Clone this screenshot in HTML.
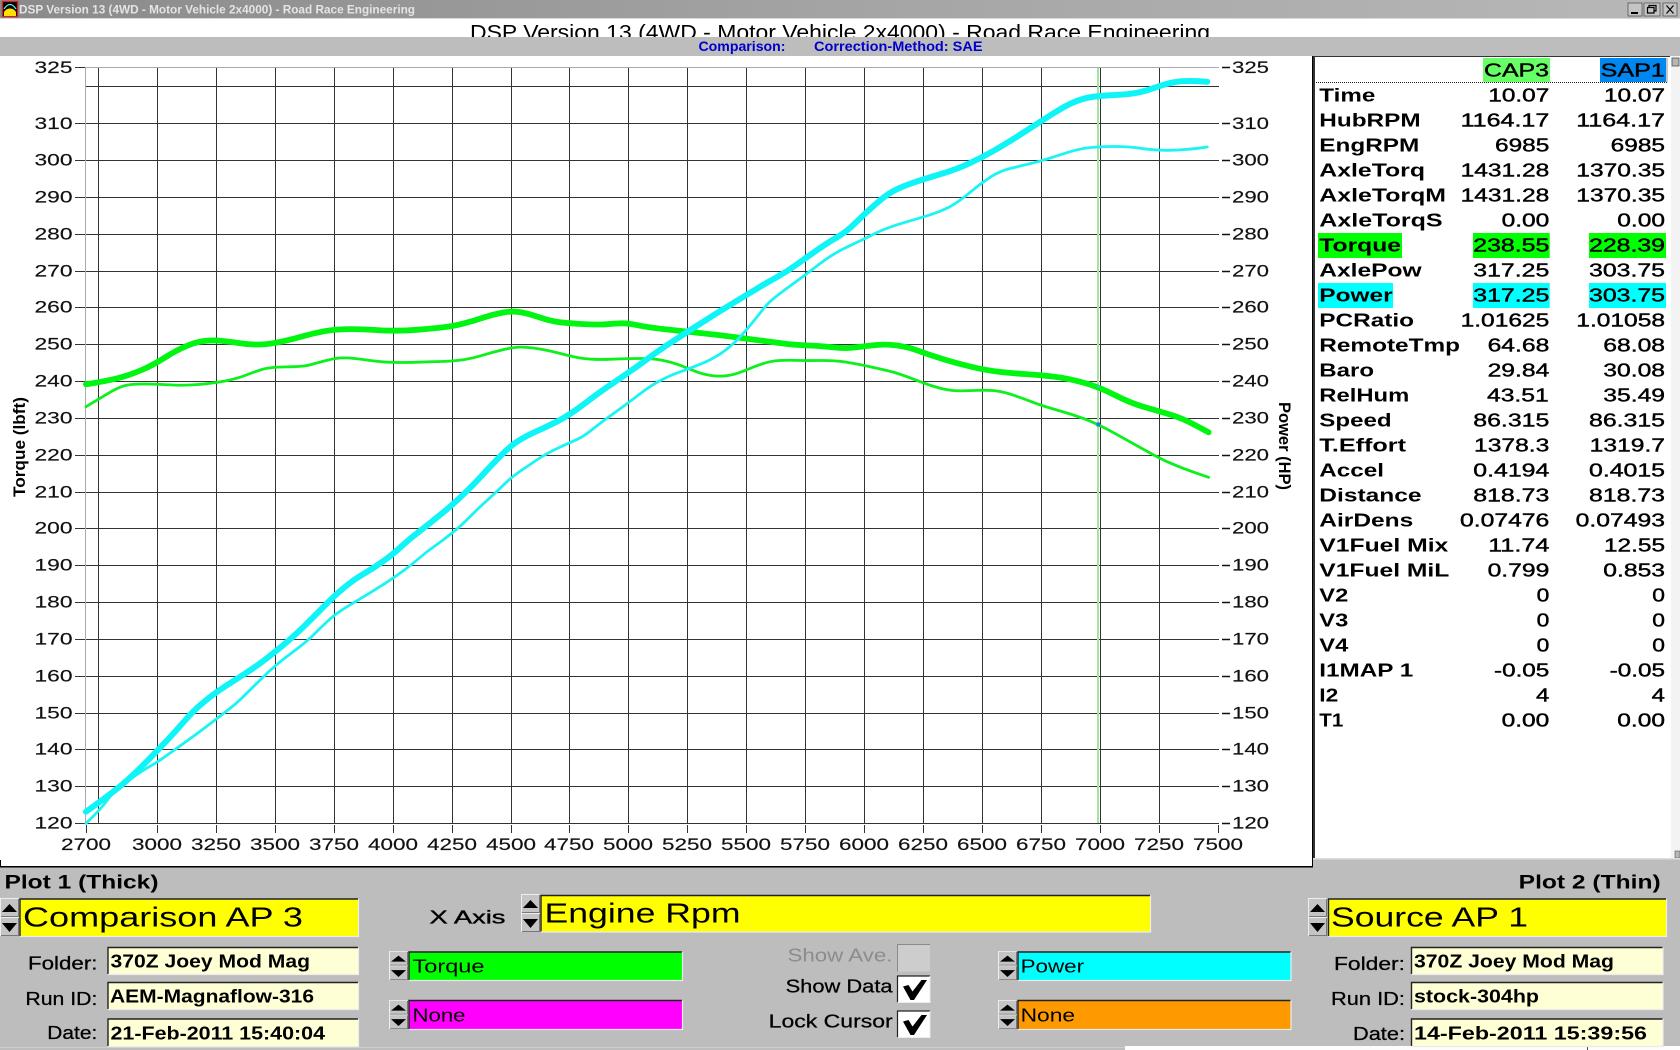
<!DOCTYPE html>
<html lang="en"><head><meta charset="utf-8"><title>DSP Version 13</title>
<style>
html,body{margin:0;padding:0;background:#bdbdbd;width:1680px;height:1050px;overflow:hidden}
svg{display:block}
text{font-family:"Liberation Sans",Arial,sans-serif;fill:#000}
.a{font-size:17px;fill:#111;stroke:#111;stroke-width:.15px}
.l{font-size:18.3px;font-weight:bold}
.v{font-size:18.3px;stroke:#000;stroke-width:.4px}
.b{font-size:18px;font-weight:bold}
.m{font-size:18px;stroke:#000;stroke-width:.25px}
.big{font-size:27.5px}
.c{font-size:18.5px}
</style></head><body>
<svg xmlns="http://www.w3.org/2000/svg" width="1680" height="1050" viewBox="0 0 1680 1050">
<defs>
<linearGradient id="tb" x1="0" x2="1" y1="0" y2="0"><stop offset="0" stop-color="#8a8a8a"/><stop offset=".5" stop-color="#a4a4a4"/><stop offset="1" stop-color="#b8b8b8"/></linearGradient>
<clipPath id="tc"><rect x="0" y="19" width="1680" height="18"/></clipPath>
<g id="spin">
<rect x="0" y="0" width="19" height="19" fill="#c4c4c4"/><rect x="0" y="19" width="19" height="19" fill="#c4c4c4"/>
<path d="M0 18.5H19M0 37.5H19M18.5 0V38" stroke="#777" stroke-width="1" fill="none"/>
<path d="M0 .5H19M.5 0V38M0 19.5H19" stroke="#eee" stroke-width="1" fill="none"/>
<path d="M2 14L9.5 6L17 14Z M2 25L9.5 34L17 25Z" fill="#000"/>
</g>
</defs>

<!-- title bar -->
<rect x="0" y="0" width="1680" height="18" fill="url(#tb)"/>
<rect x="0" y="18" width="1680" height="1" fill="#d8d8d8"/>
<rect x="2.5" y="1.5" width="15" height="15" fill="#000" stroke="#c22" stroke-width="1.4"/>
<path d="M4 16V12Q6 8.5 10 8.5T16 12V16Z" fill="#ffe000"/>
<path d="M4 9Q10 0 16 9" fill="none" stroke="#5ee" stroke-width="1.3"/>
<text x="19" y="13.5" font-size="11.5" font-weight="bold" style="fill:#e4e4e4" textLength="396" lengthAdjust="spacingAndGlyphs">DSP Version 13 (4WD - Motor Vehicle 2x4000) - Road Race Engineering</text>
<g>
<rect x="1628" y="3" width="14" height="13" fill="#c4c4c4" stroke="#555" stroke-width=".8"/>
<rect x="1631" y="12" width="7" height="2" fill="#000"/>
<rect x="1644" y="3" width="16" height="13" fill="#c4c4c4" stroke="#555" stroke-width=".8"/>
<path d="M1649 7.5V5.5H1656V11H1654M1647.5 7.5H1654V13H1647.5Z" fill="none" stroke="#000" stroke-width="1.2"/>
<rect x="1663" y="3" width="14" height="13" fill="#c4c4c4" stroke="#555" stroke-width=".8"/>
<path d="M1666.5 5.5L1673.5 13.5M1673.5 5.5L1666.5 13.5" stroke="#000" stroke-width="1.2"/>
</g>

<!-- header -->
<rect x="0" y="19" width="1680" height="18" fill="#fff"/>
<text clip-path="url(#tc)" x="470" y="39.5" font-size="21" textLength="740" lengthAdjust="spacingAndGlyphs">DSP Version 13 (4WD - Motor Vehicle 2x4000) - Road Race Engineering</text>
<rect x="0" y="37" width="1680" height="19" fill="#bdbdbd"/>
<text x="698.5" y="51" font-size="13.5" font-weight="bold" style="fill:#0000cc" textLength="87" lengthAdjust="spacingAndGlyphs">Comparison:</text>
<text x="814" y="51" font-size="13.5" font-weight="bold" style="fill:#0000cc" textLength="168.5" lengthAdjust="spacingAndGlyphs">Correction-Method: SAE</text>

<!-- plot area -->
<rect x="0" y="56" width="1313" height="811" fill="#fff"/>
<rect x="0" y="866" width="1313" height="1.5" fill="#000"/>
<rect x="0" y="860" width="1" height="7" fill="#000"/>
<rect x="1312" y="56" width="1" height="811" fill="#000"/>

<g stroke="#333" stroke-width="1" fill="none" shape-rendering="crispEdges">
<path d="M85 86.5H1219M85 123.5H1219M85 160.5H1219M85 197.5H1219M85 234.5H1219M85 271.5H1219M85 307.5H1219M85 344.5H1219M85 381.5H1219M85 418.5H1219M85 455.5H1219M85 492.5H1219M85 528.5H1219M85 565.5H1219M85 602.5H1219M85 639.5H1219M85 676.5H1219M85 713.5H1219M85 749.5H1219M85 786.5H1219M85 823.5H1219"/>
<path d="M98.5 68V823M157.5 68V823M216.5 68V823M275.5 68V823M334.5 68V823M393.5 68V823M452.5 68V823M511.5 68V823M569.5 68V823M628.5 68V823M687.5 68V823M746.5 68V823M805.5 68V823M864.5 68V823M923.5 68V823M982.5 68V823M1041.5 68V823M1100.5 68V823M1159.5 68V823"/>
<!-- left ticks -->
<path d="M75 67.5H85M75 123.5H85M75 160.5H85M75 197.5H85M75 234.5H85M75 271.5H85M75 307.5H85M75 344.5H85M75 381.5H85M75 418.5H85M75 455.5H85M75 492.5H85M75 528.5H85M75 565.5H85M75 602.5H85M75 639.5H85M75 676.5H85M75 713.5H85M75 749.5H85M75 786.5H85M75 823.5H85"/>
<!-- bottom ticks -->
<path d="M86.5 825V833M157.5 825V833M216.5 825V833M275.5 825V833M334.5 825V833M393.5 825V833M452.5 825V833M511.5 825V833M569.5 825V833M628.5 825V833M687.5 825V833M746.5 825V833M805.5 825V833M864.5 825V833M923.5 825V833M982.5 825V833M1041.5 825V833M1100.5 825V833M1159.5 825V833M1218.5 825V833"/>
</g>
<!-- right ticks -->
<path stroke="#111" stroke-width="1.5" fill="none" d="M1222 67.5H1230M1222 123.5H1230M1222 160.5H1230M1222 197.5H1230M1222 234.5H1230M1222 271.5H1230M1222 307.5H1230M1222 344.5H1230M1222 381.5H1230M1222 418.5H1230M1222 455.5H1230M1222 492.5H1230M1222 528.5H1230M1222 565.5H1230M1222 602.5H1230M1222 639.5H1230M1222 676.5H1230M1222 713.5H1230M1222 749.5H1230M1222 786.5H1230M1222 823.5H1230"/>
<rect x="85" y="67" width="1134" height="1" fill="#aaa"/>
<rect x="85" y="67" width="1" height="757" fill="#aaa"/>

<!-- cursor -->
<rect x="1097" y="68" width="2" height="755" fill="#9fe69f"/>

<!-- curves -->
<g id="curves" fill="none" stroke-linejoin="round" stroke-linecap="round">
<polyline stroke="#0cf01c" stroke-width="2.8" points="86,406.7 100,398.3 116.7,388.3 130,384 157.3,384 183.3,385.7 213.3,383.3 236.7,378.7 253.3,372.3 270,367 303.3,366.7 316.7,363 336.7,357.7 353.3,358 380,362 406.7,362.7 430,361.7 453.3,361.3 473.3,358.3 493.3,352 513.3,347.3 526.7,347 546.7,350 570,356 583.3,358.7 600,359.7 623.8,358.7 651.5,358.3 671.3,362 687.6,368.3 703,374.3 718.9,376.7 734.7,374.7 752.5,367.3 770.4,361 788.2,360 805.6,360.7 833.8,360.3 853.6,363.3 885.3,370 901.1,374.3 924.1,383.3 940.7,388.7 956.6,391.3 983.5,390 1000.2,391 1020,397.3 1042.2,406 1071.5,414 1098.4,424.3 1130.9,442.3 1160.6,459 1182.4,468.3 1208.6,477.3"/>
<polyline stroke="#00f510" stroke-width="5.8" points="86,384.3 106.7,381 130,375 153.3,365 176.7,350 196.7,341.7 213.3,340 230,341.7 250,344.7 270,344.3 293.3,339 313.3,333.3 334.3,329.3 363.3,329 383.3,330.7 406.7,330.7 430,328.7 453.3,326.3 473.3,321 493.3,314.3 513.3,310.7 530,314 546.7,320 563.3,323 600,325 615.8,323.3 628.5,323.3 647.5,327.3 687.6,331.7 718.9,335 746.6,338.7 770.4,341.7 794.1,345 821.9,346 845.6,348.7 865.5,346 887.2,344 909,347.3 924.9,353.3 948.7,361 983.5,370 1012,373.3 1039.8,375 1067.5,378.3 1098.4,386.7 1130.9,403.3 1160.6,411.7 1182.4,418.3 1208.6,432.3"/>
<polyline stroke="#1cf4f4" stroke-width="2.8" points="86,823.3 100,810 113.3,791.7 126.7,781.7 143.3,770 157.3,762.3 176.7,748.3 196.7,734 216.3,719 236.7,703.3 250,690 275.3,665 306.7,641.7 320,628.3 334.3,615 346.7,606.7 366.7,595 393.3,578.3 413.3,563.3 426.7,551.7 443.3,540 460,526.7 480,506.7 496.7,491.7 511.3,477.3 526.7,466.7 546.7,453.3 569.7,442.7 583.3,436.7 600,423.3 627.7,403.3 651.5,385 671.3,375 687.6,369.3 711,360 730.7,346.7 746.6,330 762.4,310 771.7,299.3 805.3,275 833.3,253.3 864.3,239 886.7,227.7 923.3,217 940,211.7 956.7,203.3 982.3,182.3 1000,171 1020,166 1041.3,161 1076.7,149.3 1096.7,146.7 1126.7,146.3 1146.7,149.3 1166.7,150.7 1190,149.3 1207.3,147"/>
<polyline stroke="#0ff4f6" stroke-width="6" points="86,811.7 100,801.7 120,786.7 136.7,771.7 157.3,750.7 176.7,730 193.3,710.7 213.3,694 236.7,679 256.7,666 275.3,651.7 293.3,636.7 313.3,617.3 334.3,595.7 353.3,580 373.3,568.3 393.3,554 408.3,540 430,523.3 452.3,505 473.3,485 490,466.7 511.3,445 526.7,435.7 546.7,426.7 569.7,415 600,391.7 628.5,372.7 659.4,350 687.6,331.7 718.9,311.7 746.3,295 766.7,282.7 786.7,271.7 805.3,258.3 826.7,243.3 846.7,231.7 864.3,214 886.7,194.3 903.3,186 923.3,179.3 956.7,169.3 982.3,157.3 1006.7,143.3 1041.3,121 1066.7,105 1083.3,98.3 1100,95.7 1130,94.3 1146.7,90.7 1159.3,86 1173.3,82 1190,80.7 1207.3,81.7"/>
</g>
<rect x="1097" y="385" width="3" height="3" fill="#3cb" />
<rect x="1096.5" y="422.5" width="3.5" height="4" fill="#0a86d8"/>

<!-- axis titles -->
<text class="b" transform="translate(25,497) rotate(-90)" textLength="100" lengthAdjust="spacingAndGlyphs" style="font-size:16.5px">Torque (lbft)</text>
<text class="b" transform="translate(1279,402) rotate(90)" textLength="88" lengthAdjust="spacingAndGlyphs" style="font-size:16.5px">Power (HP)</text>

<!-- left y labels -->
<g transform="translate(0,-1.2)">
<text class="a" x="34.5" y="74" textLength="38" lengthAdjust="spacingAndGlyphs">325</text>
<text class="a" x="34.5" y="130" textLength="38" lengthAdjust="spacingAndGlyphs">310</text>
<text class="a" x="34.5" y="166.5" textLength="38" lengthAdjust="spacingAndGlyphs">300</text>
<text class="a" x="34.5" y="203.5" textLength="38" lengthAdjust="spacingAndGlyphs">290</text>
<text class="a" x="34.5" y="240.5" textLength="38" lengthAdjust="spacingAndGlyphs">280</text>
<text class="a" x="34.5" y="277.5" textLength="38" lengthAdjust="spacingAndGlyphs">270</text>
<text class="a" x="34.5" y="313.5" textLength="38" lengthAdjust="spacingAndGlyphs">260</text>
<text class="a" x="34.5" y="350.5" textLength="38" lengthAdjust="spacingAndGlyphs">250</text>
<text class="a" x="34.5" y="387.5" textLength="38" lengthAdjust="spacingAndGlyphs">240</text>
<text class="a" x="34.5" y="424.5" textLength="38" lengthAdjust="spacingAndGlyphs">230</text>
<text class="a" x="34.5" y="461.5" textLength="38" lengthAdjust="spacingAndGlyphs">220</text>
<text class="a" x="34.5" y="498.5" textLength="38" lengthAdjust="spacingAndGlyphs">210</text>
<text class="a" x="34.5" y="534.5" textLength="38" lengthAdjust="spacingAndGlyphs">200</text>
<text class="a" x="34.5" y="571.5" textLength="38" lengthAdjust="spacingAndGlyphs">190</text>
<text class="a" x="34.5" y="608.5" textLength="38" lengthAdjust="spacingAndGlyphs">180</text>
<text class="a" x="34.5" y="645.5" textLength="38" lengthAdjust="spacingAndGlyphs">170</text>
<text class="a" x="34.5" y="682.5" textLength="38" lengthAdjust="spacingAndGlyphs">160</text>
<text class="a" x="34.5" y="719.5" textLength="38" lengthAdjust="spacingAndGlyphs">150</text>
<text class="a" x="34.5" y="755.5" textLength="38" lengthAdjust="spacingAndGlyphs">140</text>
<text class="a" x="34.5" y="792.5" textLength="38" lengthAdjust="spacingAndGlyphs">130</text>
<text class="a" x="34.5" y="829.5" textLength="38" lengthAdjust="spacingAndGlyphs">120</text>
</g>
<!-- right y labels -->
<g transform="translate(0,-1.2)">
<text class="a" x="1232" y="74" textLength="37" lengthAdjust="spacingAndGlyphs">325</text>
<text class="a" x="1232" y="130" textLength="37" lengthAdjust="spacingAndGlyphs">310</text>
<text class="a" x="1232" y="166.5" textLength="37" lengthAdjust="spacingAndGlyphs">300</text>
<text class="a" x="1232" y="203.5" textLength="37" lengthAdjust="spacingAndGlyphs">290</text>
<text class="a" x="1232" y="240.5" textLength="37" lengthAdjust="spacingAndGlyphs">280</text>
<text class="a" x="1232" y="277.5" textLength="37" lengthAdjust="spacingAndGlyphs">270</text>
<text class="a" x="1232" y="313.5" textLength="37" lengthAdjust="spacingAndGlyphs">260</text>
<text class="a" x="1232" y="350.5" textLength="37" lengthAdjust="spacingAndGlyphs">250</text>
<text class="a" x="1232" y="387.5" textLength="37" lengthAdjust="spacingAndGlyphs">240</text>
<text class="a" x="1232" y="424.5" textLength="37" lengthAdjust="spacingAndGlyphs">230</text>
<text class="a" x="1232" y="461.5" textLength="37" lengthAdjust="spacingAndGlyphs">220</text>
<text class="a" x="1232" y="498.5" textLength="37" lengthAdjust="spacingAndGlyphs">210</text>
<text class="a" x="1232" y="534.5" textLength="37" lengthAdjust="spacingAndGlyphs">200</text>
<text class="a" x="1232" y="571.5" textLength="37" lengthAdjust="spacingAndGlyphs">190</text>
<text class="a" x="1232" y="608.5" textLength="37" lengthAdjust="spacingAndGlyphs">180</text>
<text class="a" x="1232" y="645.5" textLength="37" lengthAdjust="spacingAndGlyphs">170</text>
<text class="a" x="1232" y="682.5" textLength="37" lengthAdjust="spacingAndGlyphs">160</text>
<text class="a" x="1232" y="719.5" textLength="37" lengthAdjust="spacingAndGlyphs">150</text>
<text class="a" x="1232" y="755.5" textLength="37" lengthAdjust="spacingAndGlyphs">140</text>
<text class="a" x="1232" y="792.5" textLength="37" lengthAdjust="spacingAndGlyphs">130</text>
<text class="a" x="1232" y="829.5" textLength="37" lengthAdjust="spacingAndGlyphs">120</text>
</g>
<!-- x labels -->
<g transform="translate(0,-1)">
<text class="a" x="61" y="851" textLength="50" lengthAdjust="spacingAndGlyphs">2700</text>
<text class="a" x="132" y="851" textLength="50" lengthAdjust="spacingAndGlyphs">3000</text>
<text class="a" x="191" y="851" textLength="50" lengthAdjust="spacingAndGlyphs">3250</text>
<text class="a" x="250" y="851" textLength="50" lengthAdjust="spacingAndGlyphs">3500</text>
<text class="a" x="309" y="851" textLength="50" lengthAdjust="spacingAndGlyphs">3750</text>
<text class="a" x="368" y="851" textLength="50" lengthAdjust="spacingAndGlyphs">4000</text>
<text class="a" x="427" y="851" textLength="50" lengthAdjust="spacingAndGlyphs">4250</text>
<text class="a" x="486" y="851" textLength="50" lengthAdjust="spacingAndGlyphs">4500</text>
<text class="a" x="544" y="851" textLength="50" lengthAdjust="spacingAndGlyphs">4750</text>
<text class="a" x="603" y="851" textLength="50" lengthAdjust="spacingAndGlyphs">5000</text>
<text class="a" x="662" y="851" textLength="50" lengthAdjust="spacingAndGlyphs">5250</text>
<text class="a" x="721" y="851" textLength="50" lengthAdjust="spacingAndGlyphs">5500</text>
<text class="a" x="780" y="851" textLength="50" lengthAdjust="spacingAndGlyphs">5750</text>
<text class="a" x="839" y="851" textLength="50" lengthAdjust="spacingAndGlyphs">6000</text>
<text class="a" x="898" y="851" textLength="50" lengthAdjust="spacingAndGlyphs">6250</text>
<text class="a" x="957" y="851" textLength="50" lengthAdjust="spacingAndGlyphs">6500</text>
<text class="a" x="1016" y="851" textLength="50" lengthAdjust="spacingAndGlyphs">6750</text>
<text class="a" x="1075" y="851" textLength="50" lengthAdjust="spacingAndGlyphs">7000</text>
<text class="a" x="1134" y="851" textLength="50" lengthAdjust="spacingAndGlyphs">7250</text>
<text class="a" x="1193" y="851" textLength="50" lengthAdjust="spacingAndGlyphs">7500</text>
</g>

<!-- data panel -->
<rect x="1313" y="56" width="367" height="802" fill="#fff"/>
<rect x="1671" y="56" width="9" height="802" fill="#f3f3f3"/>
<rect x="1672" y="58" width="7" height="8" fill="#b5b5b5" stroke="#555" stroke-width=".8"/>
<rect x="1675" y="851" width="5" height="7" fill="#b5b5b5" stroke="#555" stroke-width=".6"/>
<rect x="1313" y="56" width="2" height="803" fill="#333"/>
<rect x="1313" y="56" width="357" height="1" fill="#333"/>
<rect x="1313" y="858" width="367" height="1.5" fill="#dedede"/>
<path d="M1316 82.5H1667V57.5" fill="none" stroke="#222" stroke-width="1" stroke-dasharray="1 1"/>
<rect x="1483" y="58" width="67" height="24" fill="#66ff66"/>
<rect x="1600" y="58" width="66" height="24" fill="#0088f0"/>
<text class="v" x="1484" y="76.5" textLength="65" lengthAdjust="spacingAndGlyphs">CAP3</text>
<text class="v" x="1600.7" y="76.5" textLength="64" lengthAdjust="spacingAndGlyphs">SAP1</text>
<!-- highlights -->
<rect x="1318" y="233" width="84" height="25" fill="#00ff00"/>
<rect x="1473" y="233" width="76.7" height="25" fill="#00ff00"/>
<rect x="1589" y="233" width="77" height="25" fill="#00ff00"/>
<rect x="1318" y="283" width="75" height="25" fill="#00ffff"/>
<rect x="1473" y="283" width="76.7" height="25" fill="#00ffff"/>
<rect x="1589" y="283" width="77" height="25" fill="#00ffff"/>

<g>
<text class="l" x="1319.3" y="101.7" textLength="56" lengthAdjust="spacingAndGlyphs">Time</text>
<text class="v" x="1488.3" y="101.7" textLength="61" lengthAdjust="spacingAndGlyphs">10.07</text>
<text class="v" x="1604" y="101.7" textLength="61" lengthAdjust="spacingAndGlyphs">10.07</text>

<text class="l" x="1319.3" y="126.7" textLength="101.3" lengthAdjust="spacingAndGlyphs">HubRPM</text>
<text class="v" x="1460.6" y="126.7" textLength="88.7" lengthAdjust="spacingAndGlyphs">1164.17</text>
<text class="v" x="1576.3" y="126.7" textLength="88.7" lengthAdjust="spacingAndGlyphs">1164.17</text>

<text class="l" x="1319.3" y="151.7" textLength="100" lengthAdjust="spacingAndGlyphs">EngRPM</text>
<text class="v" x="1495" y="151.7" textLength="54.3" lengthAdjust="spacingAndGlyphs">6985</text>
<text class="v" x="1610.7" y="151.7" textLength="54.3" lengthAdjust="spacingAndGlyphs">6985</text>

<text class="l" x="1319.3" y="176.7" textLength="105.7" lengthAdjust="spacingAndGlyphs">AxleTorq</text>
<text class="v" x="1460.6" y="176.7" textLength="88.7" lengthAdjust="spacingAndGlyphs">1431.28</text>
<text class="v" x="1576.3" y="176.7" textLength="88.7" lengthAdjust="spacingAndGlyphs">1370.35</text>

<text class="l" x="1319.3" y="201.7" textLength="126.7" lengthAdjust="spacingAndGlyphs">AxleTorqM</text>
<text class="v" x="1460.6" y="201.7" textLength="88.7" lengthAdjust="spacingAndGlyphs">1431.28</text>
<text class="v" x="1576.3" y="201.7" textLength="88.7" lengthAdjust="spacingAndGlyphs">1370.35</text>

<text class="l" x="1319.3" y="226.7" textLength="123.3" lengthAdjust="spacingAndGlyphs">AxleTorqS</text>
<text class="v" x="1501.6" y="226.7" textLength="47.7" lengthAdjust="spacingAndGlyphs">0.00</text>
<text class="v" x="1617.3" y="226.7" textLength="47.7" lengthAdjust="spacingAndGlyphs">0.00</text>

<text class="l" x="1319.3" y="251.7" textLength="81.7" lengthAdjust="spacingAndGlyphs">Torque</text>
<text class="v" x="1473.3" y="251.7" textLength="76" lengthAdjust="spacingAndGlyphs">238.55</text>
<text class="v" x="1589" y="251.7" textLength="76" lengthAdjust="spacingAndGlyphs">228.39</text>

<text class="l" x="1319.3" y="276.7" textLength="102.3" lengthAdjust="spacingAndGlyphs">AxlePow</text>
<text class="v" x="1473.3" y="276.7" textLength="76" lengthAdjust="spacingAndGlyphs">317.25</text>
<text class="v" x="1589" y="276.7" textLength="76" lengthAdjust="spacingAndGlyphs">303.75</text>

<text class="l" x="1319.3" y="301.7" textLength="73.3" lengthAdjust="spacingAndGlyphs">Power</text>
<text class="v" x="1473.3" y="301.7" textLength="76" lengthAdjust="spacingAndGlyphs">317.25</text>
<text class="v" x="1589" y="301.7" textLength="76" lengthAdjust="spacingAndGlyphs">303.75</text>

<text class="l" x="1319.3" y="326.7" textLength="94.7" lengthAdjust="spacingAndGlyphs">PCRatio</text>
<text class="v" x="1460.6" y="326.7" textLength="88.7" lengthAdjust="spacingAndGlyphs">1.01625</text>
<text class="v" x="1576.3" y="326.7" textLength="88.7" lengthAdjust="spacingAndGlyphs">1.01058</text>

<text class="l" x="1319.3" y="351.7" textLength="140.7" lengthAdjust="spacingAndGlyphs">RemoteTmp</text>
<text class="v" x="1487.6" y="351.7" textLength="61.7" lengthAdjust="spacingAndGlyphs">64.68</text>
<text class="v" x="1603.3" y="351.7" textLength="61.7" lengthAdjust="spacingAndGlyphs">68.08</text>

<text class="l" x="1319.3" y="376.7" textLength="54.7" lengthAdjust="spacingAndGlyphs">Baro</text>
<text class="v" x="1487.6" y="376.7" textLength="61.7" lengthAdjust="spacingAndGlyphs">29.84</text>
<text class="v" x="1603.3" y="376.7" textLength="61.7" lengthAdjust="spacingAndGlyphs">30.08</text>

<text class="l" x="1319.3" y="401.7" textLength="90" lengthAdjust="spacingAndGlyphs">RelHum</text>
<text class="v" x="1487" y="401.7" textLength="61.7" lengthAdjust="spacingAndGlyphs">43.51</text>
<text class="v" x="1603.3" y="401.7" textLength="61.7" lengthAdjust="spacingAndGlyphs">35.49</text>

<text class="l" x="1319.3" y="426.7" textLength="72.3" lengthAdjust="spacingAndGlyphs">Speed</text>
<text class="v" x="1473.3" y="426.7" textLength="76" lengthAdjust="spacingAndGlyphs">86.315</text>
<text class="v" x="1589" y="426.7" textLength="76" lengthAdjust="spacingAndGlyphs">86.315</text>

<text class="l" x="1319.3" y="451.7" textLength="86.7" lengthAdjust="spacingAndGlyphs">T.Effort</text>
<text class="v" x="1474" y="451.7" textLength="75.3" lengthAdjust="spacingAndGlyphs">1378.3</text>
<text class="v" x="1589.7" y="451.7" textLength="75.3" lengthAdjust="spacingAndGlyphs">1319.7</text>

<text class="l" x="1319.3" y="476.7" textLength="64.7" lengthAdjust="spacingAndGlyphs">Accel</text>
<text class="v" x="1473.3" y="476.7" textLength="76" lengthAdjust="spacingAndGlyphs">0.4194</text>
<text class="v" x="1589" y="476.7" textLength="76" lengthAdjust="spacingAndGlyphs">0.4015</text>

<text class="l" x="1319.3" y="501.7" textLength="102.3" lengthAdjust="spacingAndGlyphs">Distance</text>
<text class="v" x="1473.3" y="501.7" textLength="76" lengthAdjust="spacingAndGlyphs">818.73</text>
<text class="v" x="1589" y="501.7" textLength="76" lengthAdjust="spacingAndGlyphs">818.73</text>

<text class="l" x="1319.3" y="526.7" textLength="94" lengthAdjust="spacingAndGlyphs">AirDens</text>
<text class="v" x="1460" y="526.7" textLength="89.3" lengthAdjust="spacingAndGlyphs">0.07476</text>
<text class="v" x="1575.7" y="526.7" textLength="89.3" lengthAdjust="spacingAndGlyphs">0.07493</text>

<text class="l" x="1319.3" y="551.7" textLength="129" lengthAdjust="spacingAndGlyphs">V1Fuel Mix</text>
<text class="v" x="1488.3" y="551.7" textLength="61" lengthAdjust="spacingAndGlyphs">11.74</text>
<text class="v" x="1604" y="551.7" textLength="61" lengthAdjust="spacingAndGlyphs">12.55</text>

<text class="l" x="1319.3" y="576.7" textLength="130" lengthAdjust="spacingAndGlyphs">V1Fuel MiL</text>
<text class="v" x="1487.6" y="576.7" textLength="61.7" lengthAdjust="spacingAndGlyphs">0.799</text>
<text class="v" x="1603.3" y="576.7" textLength="61.7" lengthAdjust="spacingAndGlyphs">0.853</text>

<text class="l" x="1319.3" y="601.7" textLength="29" lengthAdjust="spacingAndGlyphs">V2</text>
<text class="v" x="1536.6" y="601.7" textLength="12.7" lengthAdjust="spacingAndGlyphs">0</text>
<text class="v" x="1652.3" y="601.7" textLength="12.7" lengthAdjust="spacingAndGlyphs">0</text>

<text class="l" x="1319.3" y="626.7" textLength="29" lengthAdjust="spacingAndGlyphs">V3</text>
<text class="v" x="1536.6" y="626.7" textLength="12.7" lengthAdjust="spacingAndGlyphs">0</text>
<text class="v" x="1652.3" y="626.7" textLength="12.7" lengthAdjust="spacingAndGlyphs">0</text>

<text class="l" x="1319.3" y="651.7" textLength="29" lengthAdjust="spacingAndGlyphs">V4</text>
<text class="v" x="1536.6" y="651.7" textLength="12.7" lengthAdjust="spacingAndGlyphs">0</text>
<text class="v" x="1652.3" y="651.7" textLength="12.7" lengthAdjust="spacingAndGlyphs">0</text>

<text class="l" x="1319.3" y="676.7" textLength="94" lengthAdjust="spacingAndGlyphs">I1MAP 1</text>
<text class="v" x="1494" y="676.7" textLength="55.3" lengthAdjust="spacingAndGlyphs">-0.05</text>
<text class="v" x="1609.7" y="676.7" textLength="55.3" lengthAdjust="spacingAndGlyphs">-0.05</text>

<text class="l" x="1319.3" y="701.7" textLength="19" lengthAdjust="spacingAndGlyphs">I2</text>
<text class="v" x="1536" y="701.7" textLength="13.3" lengthAdjust="spacingAndGlyphs">4</text>
<text class="v" x="1651.7" y="701.7" textLength="13.3" lengthAdjust="spacingAndGlyphs">4</text>

<text class="l" x="1319.3" y="726.7" textLength="24" lengthAdjust="spacingAndGlyphs">T1</text>
<text class="v" x="1501.6" y="726.7" textLength="47.7" lengthAdjust="spacingAndGlyphs">0.00</text>
<text class="v" x="1617.3" y="726.7" textLength="47.7" lengthAdjust="spacingAndGlyphs">0.00</text>
</g>

<!-- bottom controls -->
<rect x="1125" y="1046" width="555" height="4" fill="#fdfdfd"/>
<rect x="1587" y="1046" width="1" height="4" fill="#444"/>
<rect x="0" y="1047" width="1125" height="1" fill="#cfcfcf"/>

<text class="b" style="font-size:19px" x="4.5" y="888.3" textLength="154" lengthAdjust="spacingAndGlyphs">Plot 1 (Thick)</text>
<text class="b" style="font-size:19px" x="1518.7" y="888.3" textLength="142" lengthAdjust="spacingAndGlyphs">Plot 2 (Thin)</text>

<!-- spinners -->
<use href="#spin" transform="translate(0,898)"/>
<use href="#spin" transform="translate(521,894)"/>
<use href="#spin" transform="translate(389,951) scale(1,.763)"/>
<use href="#spin" transform="translate(389,1000) scale(1,.763)"/>
<use href="#spin" transform="translate(998,951) scale(1,.763)"/>
<use href="#spin" transform="translate(998,1000) scale(1,.763)"/>
<use href="#spin" transform="translate(1308,898)"/>

<!-- boxes -->
<g>
<rect x="20" y="899" width="338" height="37" fill="#ffff00"/>
<rect x="541" y="895.5" width="609" height="36" fill="#ffff00"/>
<rect x="1328.5" y="899" width="337.5" height="37" fill="#ffff00"/>
<rect x="409" y="952" width="273" height="28" fill="#00ff00"/>
<rect x="409" y="1000.5" width="273" height="28.5" fill="#ff00ff"/>
<rect x="1018" y="952" width="272.5" height="28" fill="#00ffff"/>
<rect x="1018" y="1000.5" width="272.5" height="28.5" fill="#ff9900"/>
<rect x="108" y="947.5" width="250" height="26.5" fill="#ffffd5"/>
<rect x="108" y="982.5" width="250" height="26.5" fill="#ffffd5"/>
<rect x="108" y="1019" width="250" height="27" fill="#ffffd5"/>
<rect x="1411.5" y="947.5" width="251" height="26.5" fill="#ffffd5"/>
<rect x="1411.5" y="982.5" width="251" height="26.5" fill="#ffffd5"/>
<rect x="1411.5" y="1019" width="251" height="27" fill="#ffffd5"/>
</g>
<path fill="none" stroke="#222" stroke-width="1.4" d="M20 936V899H358M541 931.5V895.5H1150M1328.5 936V899H1666M409 980V952H682M409 1029V1000.5H682M1018 980V952H1290.5M1018 1029V1000.5H1290.5M108 974V947.5H358M108 1009V982.5H358M108 1046V1019H358M1411.5 974V947.5H1662.5M1411.5 1009V982.5H1662.5M1411.5 1046V1019H1662.5"/>
<path fill="none" stroke="#ececec" stroke-width="1.2" d="M20 936.5H358.5V899M541 932H1150.5V895.5M1328.5 936.5H1666.5V899M409 980.5H682.5V952M409 1029.5H682.5V1000.5M1018 980.5H1291V952M1018 1029.5H1291V1000.5M108 974.5H358.5V947.5M108 1009.5H358.5V982.5M108 1046.5H358.5V1019M1411.5 974.5H1663V947.5M1411.5 1009.5H1663V982.5M1411.5 1046.5H1663V1019"/>

<text class="big" x="23" y="926.7" textLength="280" lengthAdjust="spacingAndGlyphs">Comparison AP 3</text>
<text class="big" x="544.5" y="922.7" textLength="196" lengthAdjust="spacingAndGlyphs">Engine Rpm</text>
<text class="big" x="1331" y="926.7" textLength="197" lengthAdjust="spacingAndGlyphs">Source AP 1</text>
<text class="b" x="429.5" y="923.3" textLength="76" lengthAdjust="spacingAndGlyphs" style="font-weight:normal;stroke:#000;stroke-width:.35px">X Axis</text>

<text class="c" x="412.5" y="972.7" textLength="72" lengthAdjust="spacingAndGlyphs">Torque</text>
<text class="c" x="412.5" y="1021.7" textLength="53" lengthAdjust="spacingAndGlyphs">None</text>
<text class="c" x="1020.6" y="972.7" textLength="63.5" lengthAdjust="spacingAndGlyphs">Power</text>
<text class="c" x="1020.6" y="1021.7" textLength="54.5" lengthAdjust="spacingAndGlyphs">None</text>

<text class="b" x="110.5" y="967.3" textLength="199.5" lengthAdjust="spacingAndGlyphs">370Z Joey Mod Mag</text>
<text class="b" x="110" y="1002.7" textLength="204" lengthAdjust="spacingAndGlyphs">AEM-Magnaflow-316</text>
<text class="b" x="110.5" y="1039.3" textLength="214.5" lengthAdjust="spacingAndGlyphs">21-Feb-2011 15:40:04</text>
<text class="b" x="1414" y="967.3" textLength="200" lengthAdjust="spacingAndGlyphs">370Z Joey Mod Mag</text>
<text class="b" x="1414" y="1002.7" textLength="125" lengthAdjust="spacingAndGlyphs">stock-304hp</text>
<text class="b" x="1414" y="1039.3" textLength="233" lengthAdjust="spacingAndGlyphs">14-Feb-2011 15:39:56</text>

<text class="m" x="28" y="969.3" textLength="69.5" lengthAdjust="spacingAndGlyphs">Folder:</text>
<text class="m" x="25.4" y="1005" textLength="72" lengthAdjust="spacingAndGlyphs">Run ID:</text>
<text class="m" x="47.3" y="1039" textLength="50" lengthAdjust="spacingAndGlyphs">Date:</text>
<text class="m" x="1334" y="970" textLength="71" lengthAdjust="spacingAndGlyphs">Folder:</text>
<text class="m" x="1331" y="1005" textLength="74" lengthAdjust="spacingAndGlyphs">Run ID:</text>
<text class="m" x="1353" y="1040" textLength="52" lengthAdjust="spacingAndGlyphs">Date:</text>

<!-- show options -->
<text class="m" x="787.5" y="961.7" textLength="105" lengthAdjust="spacingAndGlyphs" style="fill:#8c8c8c;stroke:none">Show Ave.</text>
<text class="m" x="785.6" y="992.7" textLength="107" lengthAdjust="spacingAndGlyphs">Show Data</text>
<text class="m" x="768.7" y="1027.7" textLength="124" lengthAdjust="spacingAndGlyphs">Lock Cursor</text>
<rect x="897.5" y="944.5" width="32.5" height="27" fill="#cdcdcd"/>
<path d="M897.5 971.5V944.5H930" fill="none" stroke="#8a8a8a" stroke-width="1"/>
<rect x="897.5" y="976" width="32.5" height="26.5" fill="#fff"/>
<path d="M897.5 1002.5V976H930" fill="none" stroke="#222" stroke-width="1.2"/>
<path d="M897.5 1002.5H930V976" fill="none" stroke="#ececec" stroke-width="1"/>
<path d="M903 986.5L908.5 985L912.5 991.5L921.5 980H927L914 1000H910.5Z" fill="#000"/>
<rect x="897.5" y="1011" width="32.5" height="26.5" fill="#fff"/>
<path d="M897.5 1037.5V1011H930" fill="none" stroke="#222" stroke-width="1.2"/>
<path d="M897.5 1037.5H930V1011" fill="none" stroke="#ececec" stroke-width="1"/>
<path d="M903 1021.5L908.5 1020L912.5 1026.5L921.5 1015H927L914 1035H910.5Z" fill="#000"/>
</svg>
<script>
(function(){
var g=document.getElementById('curves');if(!g)return;
Array.prototype.slice.call(g.querySelectorAll('polyline')).forEach(function(pl){
  var p=pl.getAttribute('points').trim().split(/\s+/).map(function(s){return s.split(',').map(Number)});
  var d='M'+p[0][0]+' '+p[0][1];
  for(var i=1;i<p.length-1;i++){
    var mx=(p[i][0]+p[i+1][0])/2,my=(p[i][1]+p[i+1][1])/2;
    d+='Q'+p[i][0]+' '+p[i][1]+' '+mx.toFixed(1)+' '+my.toFixed(1);
  }
  d+='L'+p[p.length-1][0]+' '+p[p.length-1][1];
  var e=document.createElementNS('http://www.w3.org/2000/svg','path');
  e.setAttribute('d',d);
  e.setAttribute('stroke',pl.getAttribute('stroke'));
  e.setAttribute('stroke-width',pl.getAttribute('stroke-width'));
  g.replaceChild(e,pl);
});
})();
</script>
</body></html>
